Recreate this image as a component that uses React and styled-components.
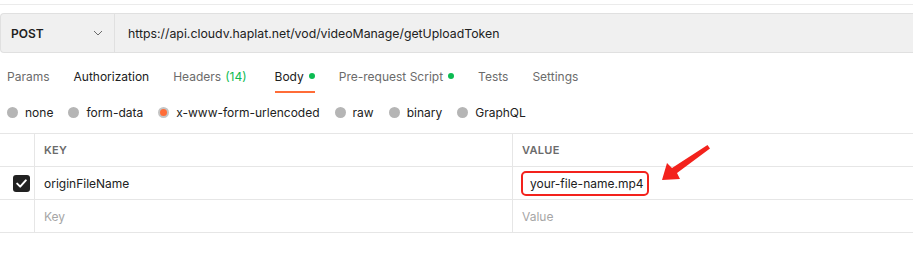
import React from 'react';
import styled, { createGlobalStyle } from 'styled-components';

const GlobalStyle = createGlobalStyle`
  body {
    margin: 0;
    background: #ffffff;
    font-family: Inter, "Noto Sans", sans-serif;
    color: #212121;
  }
`;

const tabs = [
  { label: 'Params' },
  { label: 'Authorization', strong: true },
  { label: 'Headers', count: '(14)' },
  { label: 'Body', dot: true, active: true },
  { label: 'Pre-request Script', dot: true },
  { label: 'Tests' },
  { label: 'Settings' },
];

const bodyTypes = ['none', 'form-data', 'x-www-form-urlencoded', 'raw', 'binary', 'GraphQL'];

function App() {
  return (
    <Page>
      <GlobalStyle />
      <TopRule />
      <RequestBar>
        <MethodSelect>
          <span>POST</span>
          <svg width="10" height="6" viewBox="0 0 10 6" fill="none">
            <path d="M1 1l4 4 4-4" stroke="#6b6b6b" strokeWidth="1" />
          </svg>
        </MethodSelect>
        <UrlText>https://api.cloudv.haplat.net/vod/videoManage/getUploadToken</UrlText>
      </RequestBar>

      <TabBar>
        {tabs.map((t) => (
          <Tab key={t.label} $active={t.active} $strong={t.strong || t.active}>
            {t.label}
            {t.count && <Count>{t.count}</Count>}
            {t.dot && <Dot />}
          </Tab>
        ))}
      </TabBar>

      <RadioRow>
        {bodyTypes.map((b) => (
          <RadioItem key={b}>
            <Radio $checked={b === 'x-www-form-urlencoded'} />
            {b}
          </RadioItem>
        ))}
      </RadioRow>

      <Table>
        <Row>
          <CheckCell />
          <HeadCell>KEY</HeadCell>
          <HeadCell>VALUE</HeadCell>
        </Row>
        <Row>
          <CheckCell>
            <CheckBox>
              <svg width="11" height="9" viewBox="0 0 11 9" fill="none">
                <path d="M1.2 4.6l3 3L9.8 1.4" stroke="#fff" strokeWidth="2" strokeLinecap="round" strokeLinejoin="round" />
              </svg>
            </CheckBox>
          </CheckCell>
          <Cell>originFileName</Cell>
          <Cell>
            <Highlight>your-file-name.mp4</Highlight>
            <Arrow width="60" height="46" viewBox="0 0 60 46">
              <polygon points="45.5,0 48,3.5 15,28 18,34 0,35 5,18 10,23" fill="#f3221c" />
            </Arrow>
          </Cell>
        </Row>
        <Row>
          <CheckCell />
          <Cell $placeholder>Key</Cell>
          <Cell $placeholder>Value</Cell>
        </Row>
      </Table>
    </Page>
  );
}

const Page = styled.div`
  width: 913px;
  height: 269px;
  overflow: hidden;
  background: #fff;
`;

const TopRule = styled.div`
  height: 4px;
  border-bottom: 1px solid #ebebeb;
`;

const RequestBar = styled.div`
  margin-top: 8px;
  height: 40px;
  box-sizing: border-box;
  display: flex;
  align-items: stretch;
  background: #f0f0f0;
  border: 1px solid #e0e0e0;
  border-right: none;
  border-radius: 4px 0 0 4px;
`;

const MethodSelect = styled.div`
  width: 114px;
  box-sizing: border-box;
  display: flex;
  align-items: center;
  justify-content: space-between;
  padding: 0 11px 0 10px;
  border-right: 1px solid #e0e0e0;
  font-size: 12px;
  font-weight: 600;
  color: #212121;
`;

const UrlText = styled.div`
  display: flex;
  align-items: center;
  padding-left: 13px;
  font-size: 12.3px;
  color: #212121;
`;

const TabBar = styled.div`
  display: flex;
  align-items: stretch;
  height: 40px;
  padding-left: 7px;
  gap: 24px;
`;

const Tab = styled.div`
  position: relative;
  display: flex;
  align-items: center;
  padding-top: 6px;
  font-size: 12px;
  color: ${(p) => (p.$strong ? '#212121' : '#6b6b6b')};
  white-space: pre;

  ${(p) =>
    p.$active &&
    `
    &::after {
      content: '';
      position: absolute;
      left: 0;
      right: 0;
      bottom: 0;
      height: 2px;
      background: #ff6c37;
    }
  `}
`;

const Count = styled.span`
  margin-left: 4px;
  margin-right: 4px;
  color: #0cbb52;
`;

const Dot = styled.span`
  width: 6px;
  height: 6px;
  margin-left: 5px;
  border-radius: 50%;
  background: #0cbb52;
`;

const RadioRow = styled.div`
  display: flex;
  align-items: center;
  height: 38px;
  margin-bottom: 2px;
  padding-left: 7px;
  gap: 15px;
`;

const RadioItem = styled.label`
  display: flex;
  align-items: center;
  gap: 7px;
  font-size: 12px;
  color: #212121;
`;

const Radio = styled.span`
  width: 11px;
  height: 11px;
  box-sizing: border-box;
  border-radius: 50%;
  background: ${(p) => (p.$checked ? '#ff6c37' : '#b5b5b5')};
  border: ${(p) => (p.$checked ? '2px solid #c4c4c4' : 'none')};
`;

const Table = styled.div`
  border-top: 1px solid #e6e6e6;
`;

const Row = styled.div`
  display: grid;
  grid-template-columns: 35px 478px 1fr;
  height: 33px;
  box-sizing: border-box;
  border-bottom: 1px solid #e6e6e6;
`;

const CheckCell = styled.div`
  display: flex;
  align-items: center;
  justify-content: center;
  border-right: 1px solid #e6e6e6;
`;

const CheckBox = styled.span`
  width: 17px;
  height: 17px;
  border-radius: 3px;
  background: #212121;
  display: flex;
  align-items: center;
  justify-content: center;
  margin-left: 8px;
`;

const Cell = styled.div`
  position: relative;
  display: flex;
  align-items: center;
  padding-left: 9px;
  font-size: 12px;
  color: ${(p) => (p.$placeholder ? '#a6a6a6' : '#212121')};
  &:nth-child(2) {
    border-right: 1px solid #e6e6e6;
  }
`;

const HeadCell = styled(Cell)`
  font-size: 11px;
  font-weight: 600;
  color: #6b6b6b;
  letter-spacing: 0.3px;
`;

const Highlight = styled.span`
  padding: 3px 3px 3px 7px;
  margin-left: -1px;
  border: 2.5px solid #f3221c;
  border-radius: 5px;
`;

const Arrow = styled.svg`
  position: absolute;
  left: 149px;
  top: -22px;
`;

export default App;
